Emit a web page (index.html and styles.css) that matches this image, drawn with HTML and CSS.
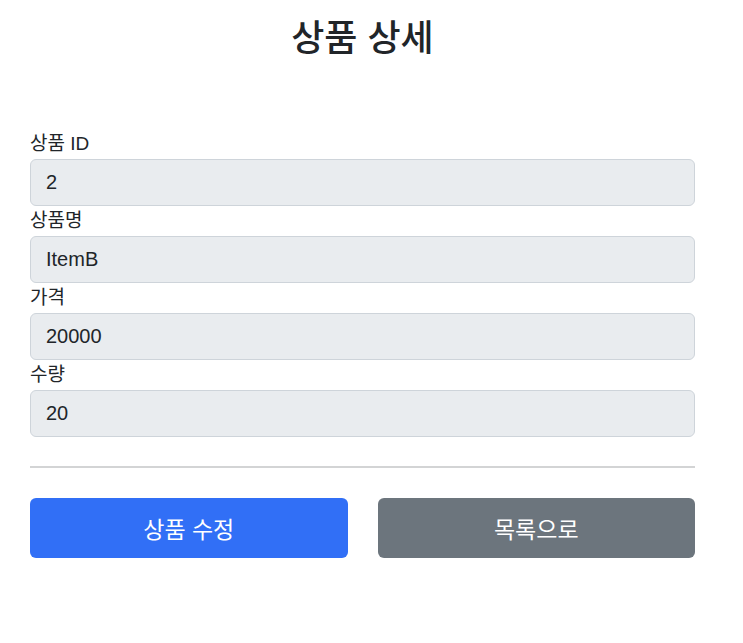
FILE: index.html
```html
<!DOCTYPE html>
<html lang="ko">
<head>
    <meta charset="UTF-8">
    <meta name="viewport" content="width=device-width, initial-scale=1.0">
    <title>상품 상세</title>
    <link rel="stylesheet" href="styles.css">
</head>
<body>
    <div class="container">
        <div class="page-header">
            <h2>상품 상세</h2>
        </div>
        <form class="item-form">
            <div class="field">
                <label for="itemId">상품 ID</label>
                <input type="text" id="itemId" value="2" readonly>
            </div>
            <div class="field">
                <label for="itemName">상품명</label>
                <input type="text" id="itemName" value="ItemB" readonly>
            </div>
            <div class="field">
                <label for="price">가격</label>
                <input type="text" id="price" value="20000" readonly>
            </div>
            <div class="field">
                <label for="quantity">수량</label>
                <input type="text" id="quantity" value="20" readonly>
            </div>
        </form>
        <hr class="divider">
        <div class="actions">
            <button type="button" class="btn btn-primary">상품 수정</button>
            <button type="button" class="btn btn-secondary">목록으로</button>
        </div>
    </div>
</body>
</html>
```

FILE: styles.css
```css
body {
    margin: 0;
    font-family: "Liberation Sans", "Noto Sans CJK KR", sans-serif;
    color: #212529;
    background: #fff;
}
.container {
    width: 665px;
    margin: 0 30px;
}
.page-header {
    text-align: center;
    padding-top: 17px;
    margin-bottom: 69px;
}
.page-header h2 {
    margin: 0;
    font-size: 36px;
    font-weight: 500;
    line-height: 43px;
}
.field label {
    display: block;
    font-size: 19px;
    line-height: 30px;
}
.field input {
    display: block;
    width: 100%;
    height: 47px;
    box-sizing: border-box;
    padding: 0 15px;
    font-family: inherit;
    font-size: 20px;
    color: #212529;
    background: #e9ecef;
    border: 1px solid #ced4da;
    border-radius: 6px;
    outline: none;
}
.divider {
    margin: 29px 0 30px;
    border: 0;
    border-top: 2px solid #d3d4d5;
}
.actions {
    display: grid;
    grid-template-columns: 1fr 1fr;
    gap: 30px;
}
.btn {
    height: 60px;
    border: 0;
    border-radius: 6px;
    color: #fff;
    font-family: inherit;
    font-size: 23px;
    cursor: pointer;
}
.btn-primary {
    background: #316ff6;
}
.btn-secondary {
    background: #6c757d;
}
```
